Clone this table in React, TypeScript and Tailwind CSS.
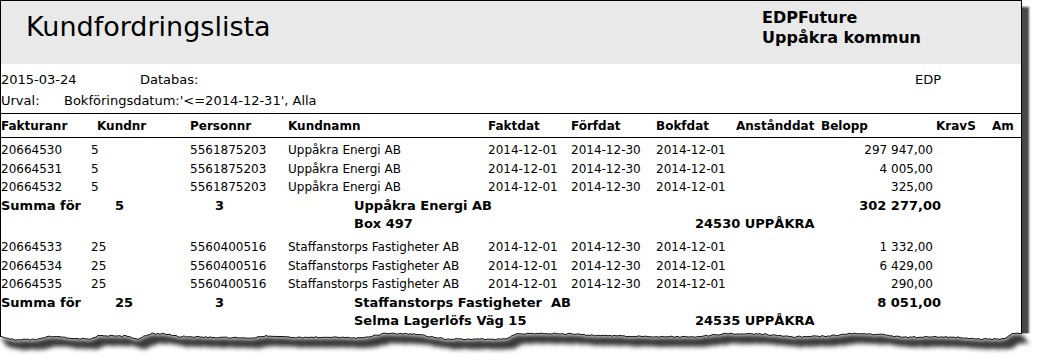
import React from 'react'

type Invoice = { nr: string; amount: string }
type Group = {
    kundnr: string
    personnr: string
    name: string
    sumName: string
    total: string
    address: string
    postal: string
    invoices: Invoice[]
}

const groups: Group[] = [
    {
        kundnr: "5",
        personnr: "5561875203",
        name: "Uppåkra Energi AB",
        sumName: "Uppåkra Energi AB",
        total: "302 277,00",
        address: "Box 497",
        postal: "24530 UPPÅKRA",
        invoices: [
            { nr: "20664530", amount: "297 947,00" },
            { nr: "20664531", amount: "4 005,00" },
            { nr: "20664532", amount: "325,00" },
        ],
    },
    {
        kundnr: "25",
        personnr: "5560400516",
        name: "Staffanstorps Fastigheter AB",
        sumName: "Staffanstorps Fastigheter  AB",
        total: "8 051,00",
        address: "Selma Lagerlöfs Väg 15",
        postal: "24535 UPPÅKRA",
        invoices: [
            { nr: "20664533", amount: "1 332,00" },
            { nr: "20664534", amount: "6 429,00" },
            { nr: "20664535", amount: "290,00" },
        ],
    },
]

// rough outline of the torn bottom edge (page x, page y)
const EDGE: [number, number][] = [
    [0, 337], [15, 339.5], [35, 339.5], [50, 336.5], [62, 337], [72, 339], [90, 339],
    [97, 336], [128, 336], [137, 339.5], [147, 335], [152, 333.5], [165, 334], [180, 336.5],
    [250, 338], [265, 336], [300, 337.5], [330, 337], [360, 338], [385, 333.5], [415, 334],
    [430, 336.5], [445, 339], [505, 339], [515, 334], [560, 333.5], [600, 335.5], [650, 336.5],
    [690, 337], [730, 333.5], [760, 334], [790, 337], [830, 336], [850, 333.5], [880, 334.5],
    [900, 337], [955, 337], [975, 339], [1005, 339], [1012, 334], [1022, 333],
]

const edgeY = (x: number) => {
    let y = EDGE[EDGE.length - 1][1]
    for (let i = 0; i < EDGE.length - 1; i++) {
        const [x0, y0] = EDGE[i]
        const [x1, y1] = EDGE[i + 1]
        if (x >= x0 && x <= x1) {
            y = y0 + ((x - x0) / (x1 - x0)) * (y1 - y0)
            break
        }
    }
    const n = Math.sin(x * 12.9898) * 43758.5453
    return y + (n - Math.floor(n) - 0.5) * 1.4
}

const TornEdge = () => {
    const pts: [number, number][] = []
    for (let x = 0; x <= 1022; x += 2) pts.push([x, edgeY(x)])
    const line = pts.map(([x, y]) => `${x},${y.toFixed(1)}`).join(" ")
    const paperCut = `${line} 1037,333 1037,356 0,356`
    const top = pts.map(([x, y]) => `${x},${(y + 1).toFixed(1)}`).join(" ")
    const bottom = [...pts].reverse().map(([x, y]) => `${x + 7},${(y + 10).toFixed(1)}`).join(" ")
    return (
        <svg className="absolute left-0 top-[326px]" width="1037" height="30" viewBox="0 326 1037 30">
            <defs>
                <filter id="tornBlur" x="-5%" y="-100%" width="110%" height="300%">
                    <feGaussianBlur stdDeviation="2" />
                </filter>
                <clipPath id="tornClip">
                    <polygon points={paperCut} />
                </clipPath>
            </defs>
            <polygon points={paperCut} fill="#ffffff" />
            <g clipPath="url(#tornClip)">
                <polygon points={`${top} ${bottom}`} fill="#2e2e2e" opacity="0.95" filter="url(#tornBlur)" />
            </g>
            <polyline points={line} fill="none" stroke="#111" strokeWidth="1" />
        </svg>
    )
}

const App = () => {
    return (
        <div className="relative w-[1037px] h-[356px] overflow-hidden bg-white text-black font-['DejaVu_Sans',sans-serif]">
            <div className="w-[1022px] h-[341px] overflow-hidden border-l border-t border-r border-black bg-white shadow-[7px_7px_2px_rgba(0,0,0,0.72)]">

                {/* grey title band */}
                <div className="flex h-[63px] bg-[#e9e9e9]">
                    <div className="w-[761px] pl-[25px] pt-[9px]">
                        <h1 className="text-[27px] leading-[34px] font-normal">Kundfordringslista</h1>
                    </div>
                    <div className="pt-[7px] text-[16px] leading-[20px] font-bold">
                        <p>EDPFuture</p>
                        <p>Uppåkra kommun</p>
                    </div>
                </div>

                {/* meta */}
                <div className="pt-[6px] pb-[2px] border-b border-black text-[13px] leading-[20.5px]">
                    <div className="grid grid-cols-[139px_775px_auto]">
                        <span>2015-03-24</span>
                        <span>Databas:</span>
                        <span>EDP</span>
                    </div>
                    <div className="grid grid-cols-[63px_auto]">
                        <span>Urval:</span>
                        <span>Bokföringsdatum:'&lt;=2014-12-31', Alla</span>
                    </div>
                </div>

                {/* column headers */}
                <div className="grid h-[24px] items-center border-b border-black text-[12px] font-bold grid-cols-[96px_93px_98px_200px_83px_85px_80px_85px_115px_56px_auto]">
                    <span>Fakturanr</span>
                    <span>Kundnr</span>
                    <span>Personnr</span>
                    <span>Kundnamn</span>
                    <span>Faktdat</span>
                    <span>Förfdat</span>
                    <span>Bokfdat</span>
                    <span>Anstånddat</span>
                    <span>Belopp</span>
                    <span>KravS</span>
                    <span>Am</span>
                </div>

                <div className="pt-[3px] flex flex-col gap-[4.5px]">
                    {groups.map((g) => (
                        <div key={g.kundnr} className="text-[12px] leading-[18.5px]">
                            {g.invoices.map((inv) => (
                                <div key={inv.nr} className="grid grid-cols-[90px_99px_98px_200px_83px_85px_164px_113px] whitespace-nowrap">
                                    <span>{inv.nr}</span>
                                    <span>{g.kundnr}</span>
                                    <span>{g.personnr}</span>
                                    <span>{g.name}</span>
                                    <span>2014-12-01</span>
                                    <span>2014-12-30</span>
                                    <span>2014-12-01</span>
                                    <span className="text-right">{inv.amount}</span>
                                </div>
                            ))}
                            <div className="grid grid-cols-[114px_100px_139px_476px_111px] font-bold text-[13px] whitespace-pre">
                                <span>Summa för</span>
                                <span>{g.kundnr}</span>
                                <span>3</span>
                                <span>{g.sumName}</span>
                                <span className="text-right">{g.total}</span>
                            </div>
                            <div className="grid grid-cols-[353px_341px_auto] font-bold text-[13px] whitespace-pre">
                                <span></span>
                                <span>{g.address}</span>
                                <span>{g.postal}</span>
                            </div>
                        </div>
                    ))}
                </div>
            </div>

            <TornEdge />
        </div>
    )
}

export default App
